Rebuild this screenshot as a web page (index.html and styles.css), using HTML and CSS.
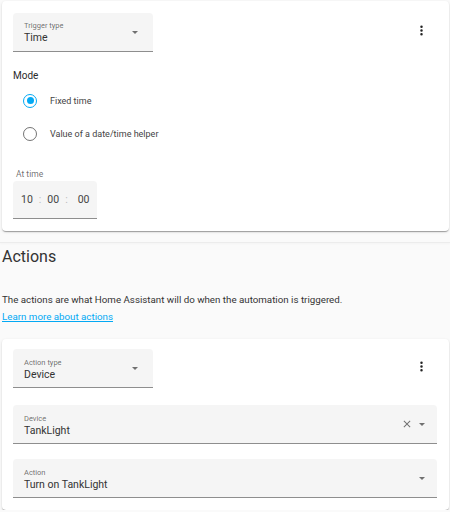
FILE: index.html
```html
<!DOCTYPE html>
<html>
<head>
  <meta charset="utf-8">
  <title>Automation editor</title>
  <link rel="stylesheet" href="styles.css">
</head>
<body>

<div class="page">

  <div class="card trigger-card">
    <div class="card-header">
      <div class="field select short">
        <div class="field-body">
          <span class="field-label">Trigger type</span>
          <span class="field-value">Time</span>
        </div>
        <span class="arrow"></span>
      </div>
      <svg class="kebab" viewBox="0 0 24 24"><path d="M12,16A2,2 0 0,1 14,18A2,2 0 0,1 12,20A2,2 0 0,1 10,18A2,2 0 0,1 12,16M12,10A2,2 0 0,1 14,12A2,2 0 0,1 12,14A2,2 0 0,1 10,12A2,2 0 0,1 12,10M12,4A2,2 0 0,1 14,6A2,2 0 0,1 12,8A2,2 0 0,1 10,6A2,2 0 0,1 12,4Z"/></svg>
    </div>

    <div class="mode-label">Mode</div>
    <div class="radio-group">
      <div class="radio-row">
        <span class="radio checked"></span>
        <span>Fixed time</span>
      </div>
      <div class="radio-row">
        <span class="radio"></span>
        <span>Value of a date/time helper</span>
      </div>
    </div>

    <div class="time-label">At time</div>
    <div class="time-field">
      <span>10</span>
      <span class="colon">:</span>
      <span>00</span>
      <span class="colon">:</span>
      <span class="last">00</span>
    </div>
  </div>

  <div class="divider"></div>

  <h2 class="section-title">Actions</h2>
  <p class="section-text">
    The actions are what Home Assistant will do when the automation is triggered.
    <br>
    <a href="#">Learn more about actions</a>
  </p>

  <div class="card action-card">
    <div class="card-header">
      <div class="field select short">
        <div class="field-body">
          <span class="field-label">Action type</span>
          <span class="field-value">Device</span>
        </div>
        <span class="arrow"></span>
      </div>
      <svg class="kebab" viewBox="0 0 24 24"><path d="M12,16A2,2 0 0,1 14,18A2,2 0 0,1 12,20A2,2 0 0,1 10,18A2,2 0 0,1 12,16M12,10A2,2 0 0,1 14,12A2,2 0 0,1 12,14A2,2 0 0,1 10,12A2,2 0 0,1 12,10M12,4A2,2 0 0,1 14,6A2,2 0 0,1 12,8A2,2 0 0,1 10,6A2,2 0 0,1 12,4Z"/></svg>
    </div>

    <div class="field select wide device-field">
      <div class="field-body">
        <span class="field-label">Device</span>
        <span class="field-value">TankLight</span>
      </div>
      <svg class="clear" viewBox="0 0 24 24"><path d="M19,6.41L17.59,5L12,10.59L6.41,5L5,6.41L10.59,12L5,17.59L6.41,19L12,13.41L17.59,19L19,17.59L13.41,12L19,6.41Z"/></svg>
      <span class="arrow"></span>
    </div>

    <div class="field select wide action-field">
      <div class="field-body">
        <span class="field-label">Action</span>
        <span class="field-value">Turn on TankLight</span>
      </div>
      <span class="arrow"></span>
    </div>
  </div>

</div>

</body>
</html>
```

FILE: styles.css
```css
* {
  margin: 0;
  padding: 0;
  box-sizing: border-box;
}

:root {
  --primary-color: #03a9f4;
  --text-color: #2b2b2b;
  --secondary-text: rgba(0, 0, 0, 0.58);
  --field-bg: #f5f5f5;
}

body {
  background-color: #fafafa;
  font-family: Roboto, "Noto Sans", sans-serif;
  color: var(--text-color);
}

.page {
  display: flex;
  flex-direction: column;
}

.card {
  margin: 1px 1px 0 2px;
  background: #fff;
  border-radius: 4px;
  box-shadow: 0 2px 1px -1px rgba(0, 0, 0, 0.2),
              0 1px 1px 0 rgba(0, 0, 0, 0.14),
              0 1px 3px 0 rgba(0, 0, 0, 0.12);
  padding: 12px 12px 12px 11px;
  display: flex;
  flex-direction: column;
}

.card-header {
  display: flex;
  justify-content: space-between;
  align-items: center;
}

.kebab {
  width: 15px;
  height: 15px;
  fill: #222;
  margin-right: 8px;
  margin-top: -4px;
}

.field {
  background: var(--field-bg);
  border-bottom: 1px solid rgba(0, 0, 0, 0.42);
  border-radius: 4px 4px 0 0;
  display: flex;
  align-items: center;
  padding: 0 12px 0 11px;
}

.field.short {
  width: 140px;
  height: 39px;
  padding-right: 15px;
}

.field.wide {
  width: 100%;
  height: 39px;
}

.field-body {
  flex: 1;
  display: flex;
  flex-direction: column;
  padding-top: 2px;
}

.action-card .field-body {
  padding-top: 4px;
}

.field-label {
  font-size: 7.5px;
  line-height: 10px;
  color: var(--secondary-text);
}

.field-value {
  font-size: 10.5px;
  line-height: 14px;
  color: #333;
}

.arrow {
  width: 0;
  height: 0;
  border-left: 3.5px solid transparent;
  border-right: 3.5px solid transparent;
  border-top: 3.5px solid rgba(0, 0, 0, 0.54);
  margin-top: 1px;
}

.clear {
  width: 12px;
  height: 12px;
  fill: rgba(0, 0, 0, 0.54);
  margin-right: 6px;
}

.device-field {
  margin-top: 17px;
}

.action-field {
  margin-top: 15px;
  height: 38px;
}

.mode-label {
  margin-top: 16px;
  font-size: 10px;
  line-height: 16px;
}

.radio-group {
  display: flex;
  flex-direction: column;
}

.radio-row {
  height: 33px;
  display: flex;
  align-items: center;
  gap: 13px;
  padding-left: 10px;
  font-size: 9px;
  color: #444;
}

.radio {
  width: 14px;
  height: 14px;
  border-radius: 50%;
  border: 1.5px solid rgba(0, 0, 0, 0.54);
  display: flex;
  align-items: center;
  justify-content: center;
}

.radio.checked {
  border-color: var(--primary-color);
}

.radio.checked::after {
  content: "";
  width: 7px;
  height: 7px;
  border-radius: 50%;
  background: var(--primary-color);
}

.time-label {
  margin-top: 18px;
  padding-left: 3px;
  font-size: 8.5px;
  line-height: 12px;
  color: var(--secondary-text);
}

.time-field {
  margin-top: 1px;
  width: 84px;
  height: 38px;
  background: var(--field-bg);
  border-bottom: 1px solid rgba(0, 0, 0, 0.42);
  border-radius: 4px 4px 0 0;
  display: flex;
  align-items: center;
  gap: 6px;
  padding-left: 8px;
  font-size: 10.5px;
  color: #444;
}

.time-field .colon {
  color: #bbb;
}

.time-field .last {
  margin-left: 4px;
}

.divider {
  margin-top: 11px;
  height: 1px;
  background: #ececec;
  box-shadow: 0 1px 2px rgba(0, 0, 0, 0.04);
}

.section-title {
  margin-top: 4px;
  padding-left: 2px;
  font-size: 16px;
  line-height: 20px;
  font-weight: 400;
  color: #333;
}

.section-text {
  margin-top: 24px;
  padding-left: 2px;
  font-size: 9.75px;
  line-height: 17px;
  color: #333;
}

.section-text a {
  color: var(--primary-color);
}

.action-card {
  margin-top: 14px;
  padding-top: 10px;
}
```
